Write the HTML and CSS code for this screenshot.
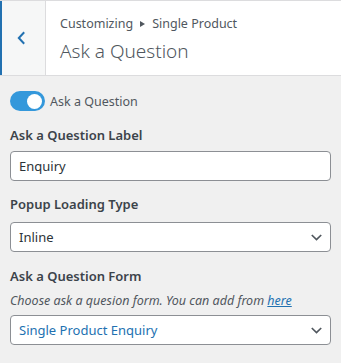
FILE: index.html
```html
<!DOCTYPE html>
<html>
<head>
<meta charset="utf-8">
<link rel="stylesheet" href="styles.css">
</head>
<body>
<div class="header">
  <div class="back">
    <svg width="9" height="14" viewBox="0 0 9 14"><path d="M7.2 1.2 L1.8 7 L7.2 12.8" fill="none" stroke="#2271b1" stroke-width="2"/></svg>
  </div>
  <div class="titles">
    <div class="crumb">Customizing<span class="arrow"></span>Single Product</div>
    <div class="title">Ask a Question</div>
  </div>
</div>
<div class="content">
  <div class="toggle-row">
    <span class="toggle"><span class="knob"></span></span>
    <span class="toggle-label">Ask a Question</span>
  </div>
  <div class="field f1">
    <div class="label">Ask a Question Label</div>
    <div class="input">Enquiry</div>
  </div>
  <div class="field f2">
    <div class="label">Popup Loading Type</div>
    <div class="select"><span>Inline</span><svg class="chev" width="11" height="7" viewBox="0 0 11 7"><path d="M0.8 1 L5.5 5.6 L10.2 1" fill="none" stroke="#50575e" stroke-width="1.7"/></svg></div>
  </div>
  <div class="field f3">
    <div class="label">Ask a Question Form</div>
    <div class="desc">Choose ask a quesion form. You can add from <a href="#">here</a></div>
    <div class="select blue"><span>Single Product Enquiry</span><svg class="chev" width="11" height="7" viewBox="0 0 11 7"><path d="M0.8 1 L5.5 5.6 L10.2 1" fill="none" stroke="#50575e" stroke-width="1.7"/></svg></div>
  </div>
</div>
</body>
</html>
```
FILE: styles.css
```css
html, body { margin: 0; padding: 0; }
body {
  background: #f0f0f0;
  font-family: "Noto Sans", "Open Sans", sans-serif;
  color: #3c434a;
  width: 341px;
  height: 363px;
  overflow: hidden;
}
.header {
  display: flex;
  background: #fff;
  border-top: 1px solid #dcdcde;
  border-bottom: 1px solid #dcdcde;
  height: 74px;
}
.back {
  width: 28px;
  background: #f6f7f7;
  border-left: 2px solid #2271b1;
  border-right: 1px solid #dcdcde;
  display: flex;
  align-items: center;
  padding-left: 15px;
  box-sizing: content-box;
}
.titles {
  padding: 14px 0 0 14px;
}
.crumb {
  font-size: 12.5px;
  line-height: 18px;
  color: #50575e;
}
.arrow {
  display: inline-block;
  width: 0;
  height: 0;
  border-top: 3px solid transparent;
  border-bottom: 3px solid transparent;
  border-left: 5px solid #50575e;
  margin: 0 7px 0 7px;
  vertical-align: 1px;
}
.title {
  font-size: 19px;
  line-height: 28px;
  color: #50575e;
  font-weight: 300;
  margin-top: 4px;
}
.content {
  padding: 15px 10px 0 10px;
}
.toggle-row {
  display: flex;
  align-items: center;
  gap: 5px;
  height: 20px;
}
.toggle {
  width: 35px;
  height: 20px;
  border-radius: 10px;
  background: #3498db;
  position: relative;
  display: inline-block;
}
.knob {
  position: absolute;
  width: 15px;
  height: 15px;
  border-radius: 50%;
  background: #fff;
  right: 3px;
  top: 2.5px;
}
.toggle-label {
  font-size: 12.5px;
  color: #50575e;
}
.label {
  font-size: 13px;
  font-weight: 600;
  line-height: 20px;
  color: #3c434a;
}
.f1 { margin-top: 14px; }
.f1 .label { margin-bottom: 6px; }
.f2 { margin-top: 13px; }
.f2 .label { margin-bottom: 8px; }
.f3 { margin-top: 14px; }
.input, .select {
  box-sizing: border-box;
  height: 30px;
  border: 1px solid #8c8f94;
  border-radius: 4px;
  background: #fff;
  font-size: 13px;
  color: #2c3338;
  padding: 0 8px;
  display: flex;
  align-items: center;
  justify-content: space-between;
  width: 321px;
}
.select.blue { color: #2271b1; }
.desc {
  font-size: 12.5px;
  font-style: italic;
  color: #50575e;
  line-height: 18px;
  margin-top: 6px;
  margin-bottom: 5px;
}
.desc a { color: #2271b1; }
```
